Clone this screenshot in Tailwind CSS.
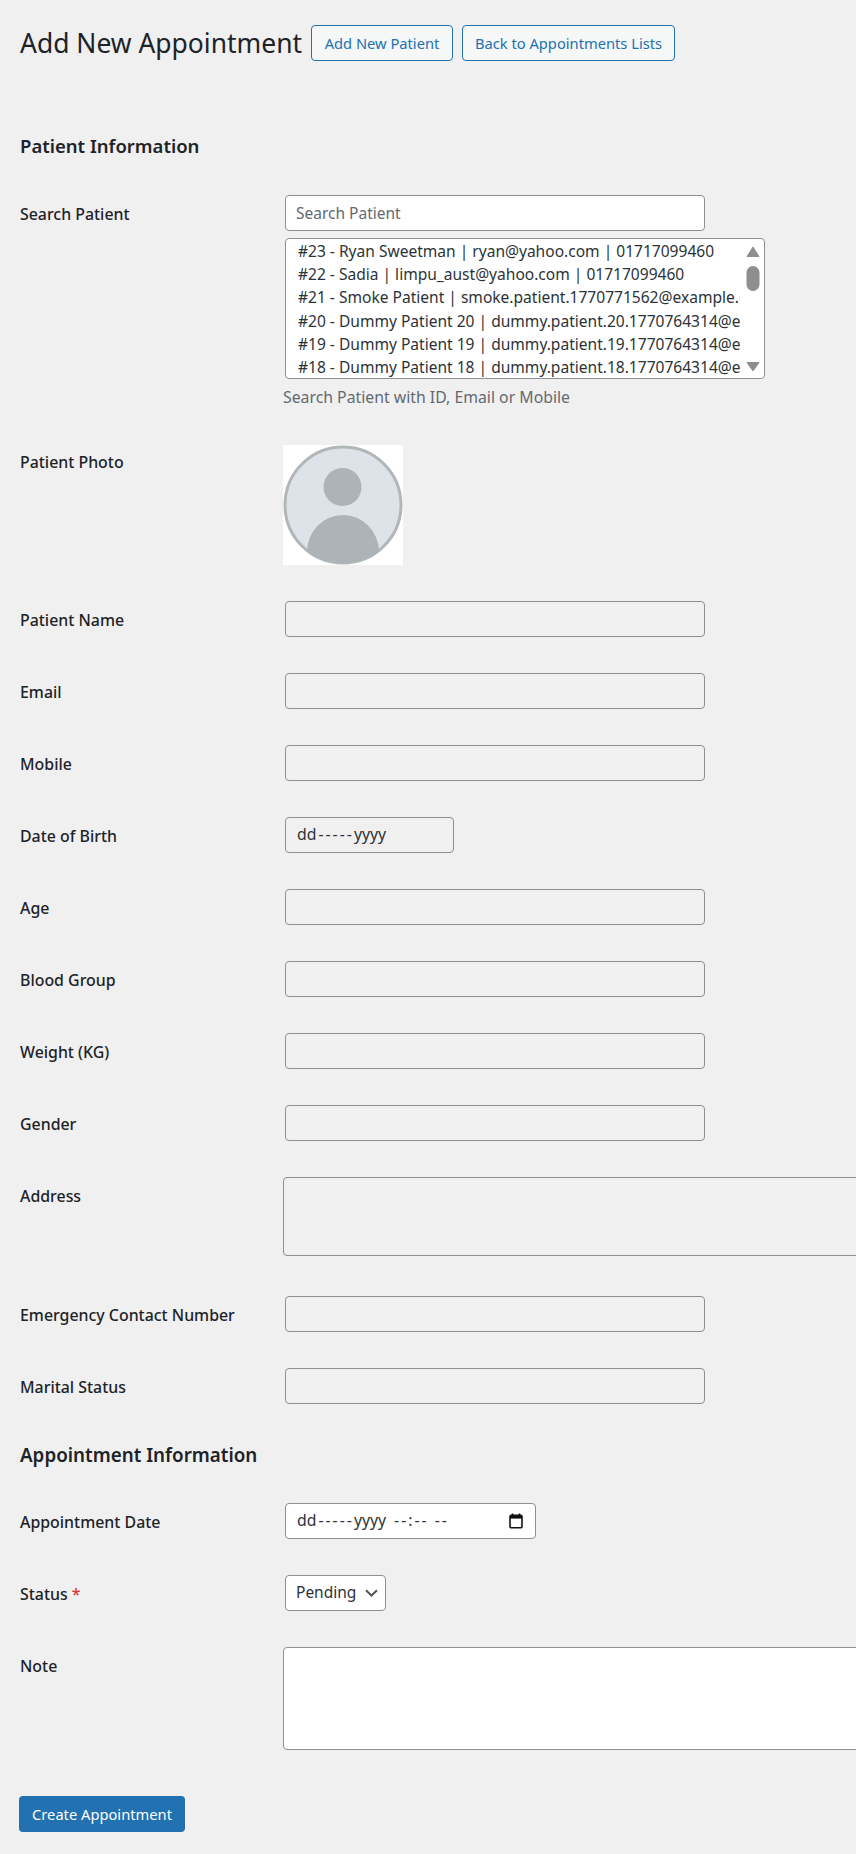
<!DOCTYPE html>
<html lang="en">

<head>
    <meta charset="UTF-8">
    <meta name="viewport" content="width=device-width, initial-scale=1.0">
    <title>Add New Appointment</title>
    <script src="https://cdn.jsdelivr.net/npm/@tailwindcss/browser@4"></script>
</head>

<body class="bg-[#f0f0f1] h-[1854px] overflow-hidden font-['Noto_Sans',sans-serif] text-[#1d2327]">

    <div class="pl-[20px] pt-[25px]">
        <!-- header -->
        <div class="flex items-center h-[36px]">
            <h1 class="pt-[1px] text-[26.45px] w-[291px] whitespace-nowrap">Add New Appointment</h1>
            <a class="h-[36px] w-[142px] flex items-center justify-center bg-[#f6f7f7] border border-[#2271b1] rounded-[4px] text-[#2271b1] text-[14.7px] whitespace-nowrap">Add New Patient</a>
            <a class="ml-[9px] h-[36px] w-[213px] flex items-center justify-center bg-[#f6f7f7] border border-[#2271b1] rounded-[4px] text-[#2271b1] text-[14.7px] whitespace-nowrap">Back to Appointments Lists</a>
        </div>

        <h2 class="mt-[70px] h-[30px] leading-[30px] text-[18.5px] font-semibold">Patient Information</h2>

        <form class="mt-[34px] flex flex-col gap-[36px]">
            <div class="grid grid-cols-[263px_1fr]">
                <label class="font-medium text-[15.9px] h-[36px] leading-[38px]">Search Patient</label>
                <div>
                    <input type="text" placeholder="Search Patient" class="block ml-[2px] w-[420px] h-[36px] px-[10px] bg-white border border-[#8c8f94] rounded-[4px] text-[15.5px] text-[#2c3338] placeholder:text-[#646970]">
                    <div class="relative ml-[2px] mt-[7px] w-[480px] h-[141px] bg-white border border-[#8c8f94] rounded-[4px] text-[15.55px] text-[#2c3338] leading-[23.2px] py-[1px]">
                        <div class="ml-[12px] w-[442px] overflow-hidden whitespace-nowrap">
                            <div>#23 - Ryan Sweetman | ryan@yahoo.com | 01717099460</div>
                            <div>#22 - Sadia | limpu_aust@yahoo.com | 01717099460</div>
                            <div>#21 - Smoke Patient | smoke.patient.1770771562@example.com | 01717099460</div>
                            <div>#20 - Dummy Patient 20 | dummy.patient.20.1770764314@example.com</div>
                            <div>#19 - Dummy Patient 19 | dummy.patient.19.1770764314@example.com</div>
                            <div>#18 - Dummy Patient 18 | dummy.patient.18.1770764314@example.com</div>
                        </div>
                        <!-- scrollbar -->
                        <svg class="absolute left-[460px] top-[7px]" width="14" height="126" viewBox="0 0 14 126" fill="#8e8e8e" stroke-linejoin="round">
                            <path d="M7 1 L13 10.5 H1 Z" stroke="#8e8e8e" />
                            <rect x="0.5" y="20" width="13" height="25" rx="6.5" />
                            <path d="M7 125 L13 116.5 H1 Z" stroke="#8e8e8e" />
                        </svg>
                    </div>
                    <p class="mt-[6px] h-[24px] leading-[24px] text-[15.8px] text-[#646970]">Search Patient with ID, Email or Mobile</p>
                </div>
            </div>

            <div class="grid grid-cols-[263px_1fr]">
                <label class="font-medium text-[15.9px] h-[36px] leading-[35px]">Patient Photo</label>
                <svg width="120" height="120" viewBox="0 0 120 120">
                    <defs>
                        <clipPath id="avatarClip">
                            <circle cx="60" cy="60" r="58.5" />
                        </clipPath>
                    </defs>
                    <rect width="120" height="120" fill="#fff" />
                    <circle cx="60" cy="60" r="58" fill="#dde3e8" stroke="#b1b6b9" stroke-width="3" />
                    <circle cx="59.5" cy="42" r="19" fill="#adb4b8" />
                    <ellipse cx="60" cy="107" rx="36" ry="37" fill="#adb4b8" clip-path="url(#avatarClip)" />
                </svg>
            </div>

            <div class="grid grid-cols-[263px_1fr]">
                <label class="font-medium text-[15.9px] h-[36px] leading-[38px]">Patient Name</label>
                <input type="text" readonly class="ml-[2px] w-[420px] h-[36px] border border-[#8c8f94] rounded-[4px]">
            </div>
            <div class="grid grid-cols-[263px_1fr]">
                <label class="font-medium text-[15.9px] h-[36px] leading-[38px]">Email</label>
                <input type="text" readonly class="ml-[2px] w-[420px] h-[36px] border border-[#8c8f94] rounded-[4px]">
            </div>
            <div class="grid grid-cols-[263px_1fr]">
                <label class="font-medium text-[15.9px] h-[36px] leading-[38px]">Mobile</label>
                <input type="text" readonly class="ml-[2px] w-[420px] h-[36px] border border-[#8c8f94] rounded-[4px]">
            </div>
            <div class="grid grid-cols-[263px_1fr]">
                <label class="font-medium text-[15.9px] h-[36px] leading-[38px]">Date of Birth</label>
                <div class="ml-[2px] w-[169px] h-[36px] pl-[11px] flex items-center border border-[#8c8f94] rounded-[4px] text-[15.8px] text-[#2c3338] whitespace-nowrap">
                    <span>dd</span><span class="tracking-[2px] ml-[2px]">-----</span><span>yyyy</span>
                </div>
            </div>
            <div class="grid grid-cols-[263px_1fr]">
                <label class="font-medium text-[15.9px] h-[36px] leading-[38px]">Age</label>
                <input type="text" readonly class="ml-[2px] w-[420px] h-[36px] border border-[#8c8f94] rounded-[4px]">
            </div>
            <div class="grid grid-cols-[263px_1fr]">
                <label class="font-medium text-[15.9px] h-[36px] leading-[38px]">Blood Group</label>
                <input type="text" readonly class="ml-[2px] w-[420px] h-[36px] border border-[#8c8f94] rounded-[4px]">
            </div>
            <div class="grid grid-cols-[263px_1fr]">
                <label class="font-medium text-[15.9px] h-[36px] leading-[38px]">Weight (KG)</label>
                <input type="text" readonly class="ml-[2px] w-[420px] h-[36px] border border-[#8c8f94] rounded-[4px]">
            </div>
            <div class="grid grid-cols-[263px_1fr]">
                <label class="font-medium text-[15.9px] h-[36px] leading-[38px]">Gender</label>
                <input type="text" readonly class="ml-[2px] w-[420px] h-[36px] border border-[#8c8f94] rounded-[4px]">
            </div>
            <div class="grid grid-cols-[263px_1fr]">
                <label class="font-medium text-[15.9px] h-[36px] leading-[38px]">Address</label>
                <textarea readonly class="block w-[680px] h-[79px] border border-[#8c8f94] rounded-[4px] resize-none"></textarea>
            </div>
            <div class="grid grid-cols-[263px_1fr] mt-[4px]">
                <label class="font-medium text-[15.9px] h-[36px] leading-[38px] whitespace-nowrap">Emergency Contact Number</label>
                <input type="text" readonly class="ml-[2px] w-[420px] h-[36px] border border-[#8c8f94] rounded-[4px]">
            </div>
            <div class="grid grid-cols-[263px_1fr]">
                <label class="font-medium text-[15.9px] h-[36px] leading-[38px]">Marital Status</label>
                <input type="text" readonly class="ml-[2px] w-[420px] h-[36px] border border-[#8c8f94] rounded-[4px]">
            </div>

            <h2 class="mb-[-3px] h-[30px] leading-[30px] text-[18.8px] font-semibold">Appointment Information</h2>

            <div class="grid grid-cols-[263px_1fr]">
                <label class="font-medium text-[15.9px] h-[36px] leading-[38px]">Appointment Date</label>
                <div class="ml-[2px] w-[251px] h-[36px] pl-[11px] pr-[12px] flex items-center justify-between bg-white border border-[#8c8f94] rounded-[4px] text-[15.8px] text-[#2c3338]">
                    <span class="whitespace-nowrap">
                        <span>dd</span><span class="tracking-[2px] ml-[2px]">-----</span><span>yyyy</span><span class="tracking-[2px] ml-[8px]">--:--</span><span class="tracking-[2px] ml-[6px]">--</span>
                    </span>
                    <svg width="14" height="16" viewBox="0 0 14 16" fill="none">
                        <path d="M3.5 0.5 V3 M10.5 0.5 V3" stroke="#111" stroke-width="1.6" />
                        <rect x="1" y="2.4" width="12" height="12.4" rx="1.4" stroke="#111" stroke-width="1.6" />
                        <rect x="1" y="2.4" width="12" height="3.2" fill="#111" />
                    </svg>
                </div>
            </div>
            <div class="grid grid-cols-[263px_1fr]">
                <label class="font-medium text-[15.9px] h-[36px] leading-[38px]">Status <span class="text-[#d63638]">*</span></label>
                <div class="ml-[2px] w-[101px] h-[36px] pl-[10px] pr-[7px] flex items-center justify-between bg-white border border-[#8c8f94] rounded-[4px] text-[15.5px] text-[#2c3338]">
                    <span>Pending</span>
                    <svg width="13" height="8" viewBox="0 0 13 8" fill="none">
                        <path d="M1 1.2 L6.5 6.5 L12 1.2" stroke="#50575e" stroke-width="2" />
                    </svg>
                </div>
            </div>
            <div class="grid grid-cols-[263px_1fr]">
                <label class="font-medium text-[15.9px] h-[36px] leading-[38px]">Note</label>
                <textarea class="block w-[680px] h-[103px] bg-white border border-[#8c8f94] rounded-[4px] resize-none"></textarea>
            </div>
        </form>

        <button type="button" class="block -ml-[1px] mt-[46px] w-[166px] h-[36px] bg-[#2271b1] rounded-[4px] text-white text-[14.7px] whitespace-nowrap">Create Appointment</button>
    </div>

</body>

</html>
